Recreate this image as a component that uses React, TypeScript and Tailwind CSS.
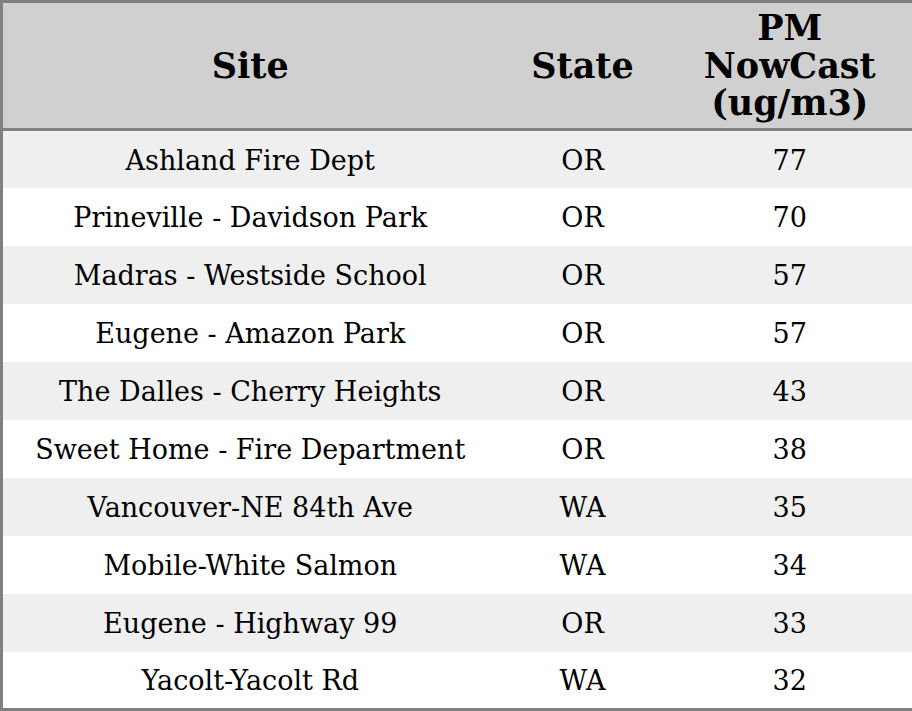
const rows: [string, string, number][] = [
  ["Ashland Fire Dept", "OR", 77],
  ["Prineville - Davidson Park", "OR", 70],
  ["Madras - Westside School", "OR", 57],
  ["Eugene - Amazon Park", "OR", 57],
  ["The Dalles - Cherry Heights", "OR", 43],
  ["Sweet Home - Fire Department", "OR", 38],
  ["Vancouver-NE 84th Ave", "WA", 35],
  ["Mobile-White Salmon", "WA", 34],
  ["Eugene - Highway 99", "OR", 33],
  ["Yacolt-Yacolt Rd", "WA", 32],
];

export default function App() {
  return (
    <div className="w-[912px] h-[711px] bg-white font-['DejaVu_Serif',serif] text-black">
      <table className="w-[912px] h-[711px] border-collapse border-[3px] border-[#808080] table-fixed">
        <colgroup>
          <col className="w-[496px]" />
          <col className="w-[170px]" />
          <col className="w-[246px]" />
        </colgroup>
        <thead>
          <tr className="h-[128px] bg-[#d0d0d0] border-b-[3px] border-[#808080] text-[35px] leading-[37.5px] font-bold">
            <th className="text-center align-middle">Site</th>
            <th className="text-center align-middle">State</th>
            <th className="text-center align-middle">
              PM
              <br />
              NowCast
              <br />
              (ug/m3)
            </th>
          </tr>
        </thead>
        <tbody className="text-[27px]">
          {rows.map(([site, state, pm], i) => (
            <tr key={site} className={"h-[57.7px] " + (i % 2 === 0 ? "bg-[#efefef]" : "bg-white")}>
              <td className="text-center align-middle pt-[3px]">{site}</td>
              <td className="text-center align-middle pt-[3px]">{state}</td>
              <td className="text-center align-middle pt-[3px]">{pm}</td>
            </tr>
          ))}
        </tbody>
      </table>
    </div>
  );
}
